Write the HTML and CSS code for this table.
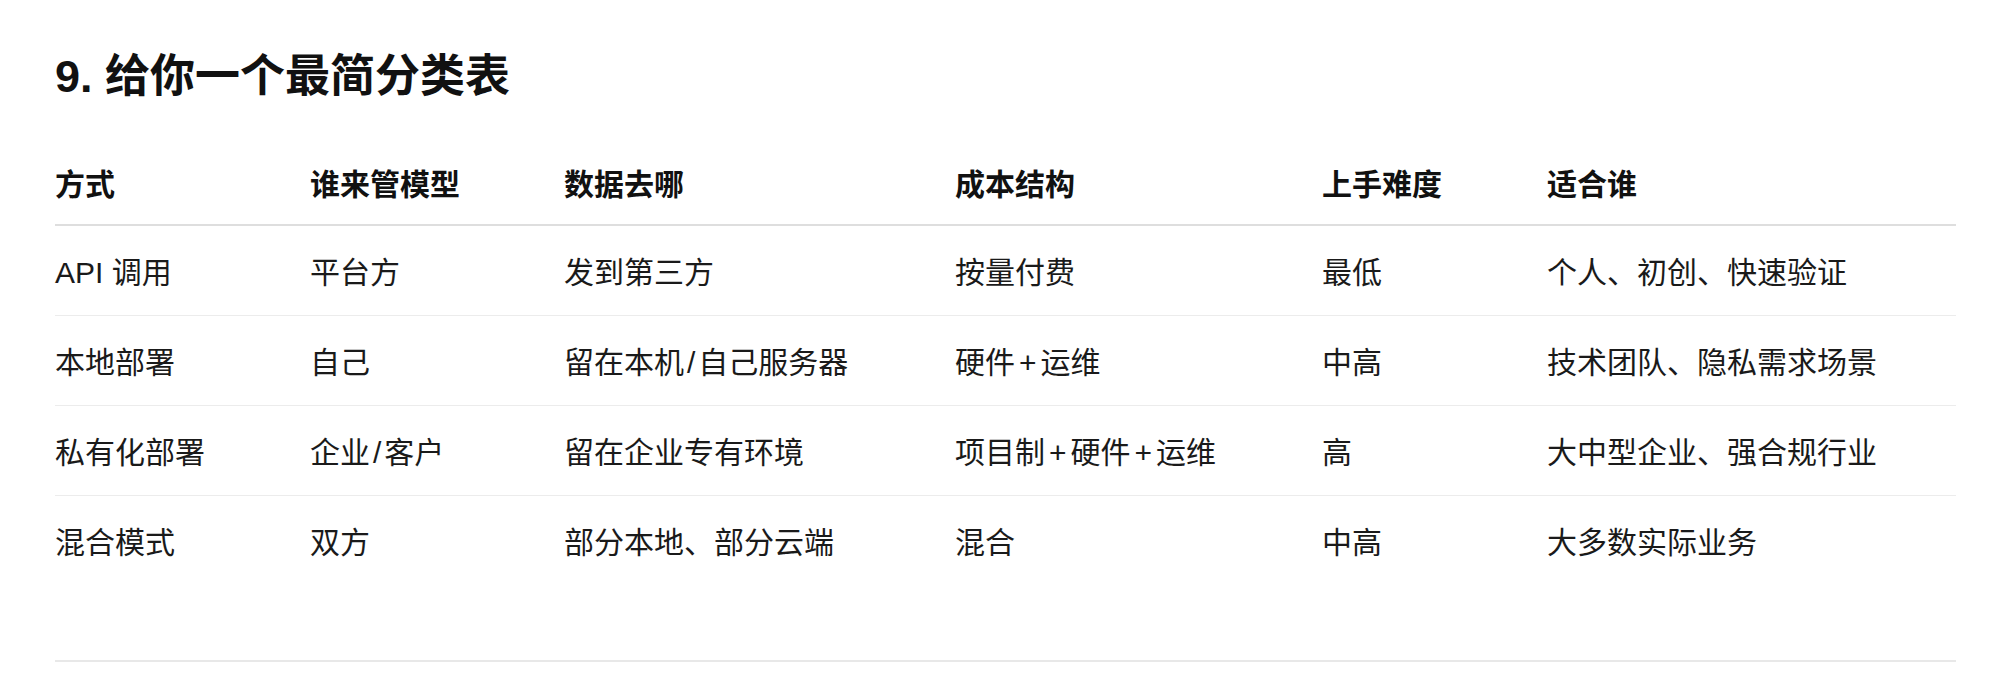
FILE: index.html
```html
<!DOCTYPE html>
<html lang="zh-CN">
<head>
<meta charset="utf-8">
<title>9. 给你一个最简分类表</title>
<link rel="stylesheet" href="styles.css">
</head>
<body>
<main class="page">
  <h2 class="title">9. 给你一个最简分类表</h2>
  <table class="grid">
    <colgroup>
      <col class="c1"><col class="c2"><col class="c3"><col class="c4"><col class="c5"><col class="c6">
    </colgroup>
    <thead>
      <tr>
        <th>方式</th><th>谁来管模型</th><th>数据去哪</th><th>成本结构</th><th>上手难度</th><th>适合谁</th>
      </tr>
    </thead>
    <tbody>
      <tr><td>API 调用</td><td>平台方</td><td>发到第三方</td><td>按量付费</td><td>最低</td><td>个人、初创、快速验证</td></tr>
      <tr><td>本地部署</td><td>自己</td><td>留在本机<span class="sep">/</span>自己服务器</td><td>硬件<span class="op">+</span>运维</td><td>中高</td><td>技术团队、隐私需求场景</td></tr>
      <tr><td>私有化部署</td><td>企业<span class="sep">/</span>客户</td><td>留在企业专有环境</td><td>项目制<span class="op">+</span>硬件<span class="op">+</span>运维</td><td>高</td><td>大中型企业、强合规行业</td></tr>
      <tr><td>混合模式</td><td>双方</td><td>部分本地、部分云端</td><td>混合</td><td>中高</td><td>大多数实际业务</td></tr>
    </tbody>
  </table>
  <hr class="rule">
</main>
</body>
</html>
```

FILE: styles.css
```css
html, body {
  margin: 0;
  padding: 0;
  background: #ffffff;
}

body {
  font-family: "Liberation Sans", "Noto Sans CJK SC", sans-serif;
  color: #1a1a1a;
}

.page {
  padding: 48px 42px 0 55px;
}

.title {
  margin: 0 0 40px 0;
  font-size: 45px;
  line-height: 58px;
  font-weight: 700;
  color: #111111;
}

.grid {
  width: 1901px;
  border-collapse: collapse;
  table-layout: fixed;
  font-size: 30px;
  line-height: 42px;
}

.c1 { width: 255px; }
.c2 { width: 254px; }
.c3 { width: 391px; }
.c4 { width: 367px; }
.c5 { width: 225px; }
.c6 { width: 409px; }

.grid th {
  text-align: left;
  font-weight: 700;
  padding: 18px 0 18px 0;
  border-bottom: 2px solid #dedede;
  color: #111111;
}

.grid td {
  padding: 26px 0 21px 0;
  border-bottom: 1px solid #ececec;
}

.grid tbody tr:last-child td {
  border-bottom: none;
}

.sep {
  margin: 0 3px;
}

.op {
  margin: 0 4px;
}

.rule {
  margin: 75px 0 0 0;
  width: 1901px;
  height: 0;
  border: none;
  border-top: 2px solid #e8e8e8;
}
```
